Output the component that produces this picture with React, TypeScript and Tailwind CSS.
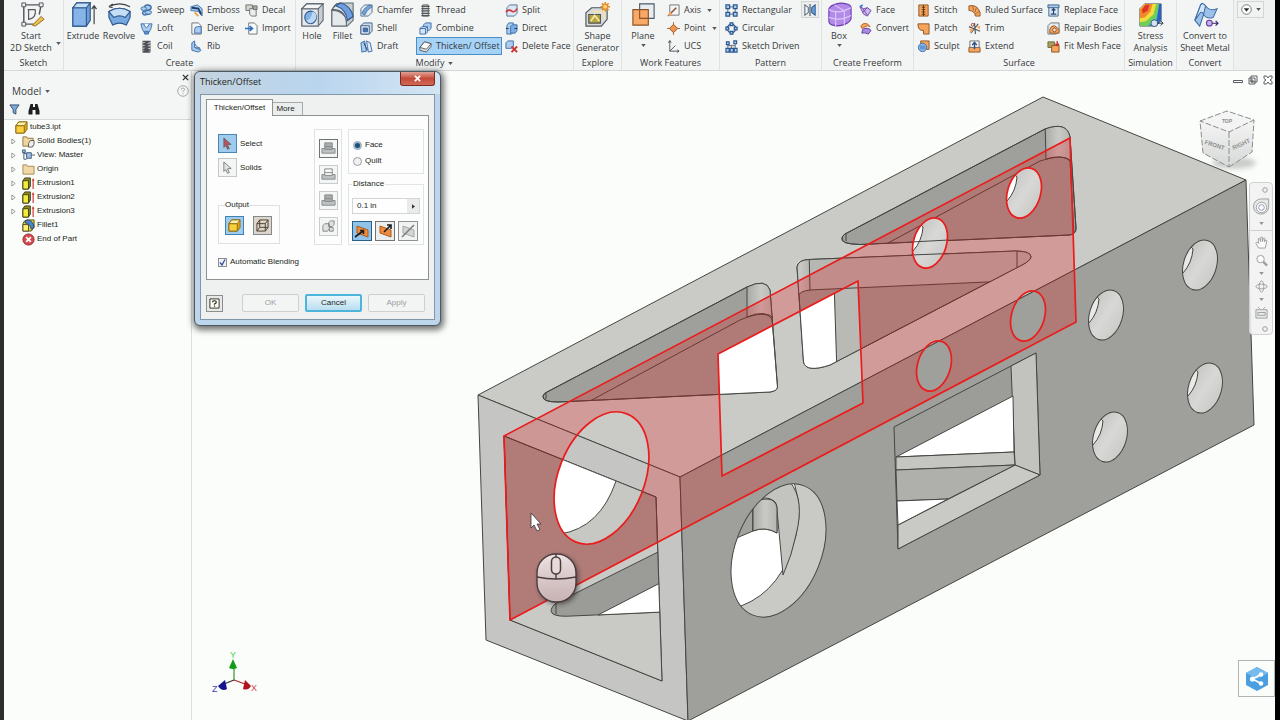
// src/App.tsx
import React, { useState } from "react";

/* ---------- ribbon icons (14 x 14 unless noted) ---------- */

const BLUE = "#3f6ea8";
const LIGHT = "#a9cdf0";
const ORANGE = "#f7a55c";
const BROWN = "#8d5426";

const smallIcons: Record<string, React.ReactNode> = {
  sweep: (
    <g stroke={BLUE} fill={LIGHT}>
      <path d="M5 5q-1-4 3-4 4 0 4 3 0 2-3 2.500L5 7.500q-3 1-2 3 1 2 4 1l4-1" strokeWidth="1.500" />
      <ellipse cx="4" cy="5" rx="3" ry="2" />
      <ellipse cx="9" cy="9" rx="3.500" ry="2" />
    </g>
  ),
  loft: (
    <g stroke={BLUE}>
      <path d="M1 2h12l-1.500 6L9 12H5L2.500 8z" fill={LIGHT} />
      <path d="M4 2q3 8 6 0" fill="#eef5fb" />
      <path d="M5 10h4v3H5z" fill="#5f92cf" />
    </g>
  ),
  coil: (
    <g stroke="#4b4f54" fill="none" strokeWidth="1.600">
      <path d="M3 1.500h8L3 4.500h8L3 7.500h8L3 10.500h8L3 13h8" />
      <path d="M3 1v12M11 1v12" stroke="#8a8e92" strokeWidth="1" />
    </g>
  ),
  emboss: (
    <g>
      <path d="M1 3l7-2 5 4v8l-4-5-8-1z" fill={LIGHT} stroke={BLUE} />
      <path d="M2 4l7 1 3 6" stroke="#1f3f6b" strokeWidth="2" fill="none" />
      <path d="M5 9l4 4" stroke="#eaa13c" strokeWidth="2" />
    </g>
  ),
  derive: (
    <g stroke="#6f7478" fill="#f5f7f8">
      <path d="M2 1h7l3 3v9H2z" />
      <path d="M5 12V8q0-3 3-3h4v7z" fill={LIGHT} stroke={BLUE} />
    </g>
  ),
  rib: (
    <g stroke={BLUE} fill={LIGHT}>
      <path d="M2 3l3-2v7l7 3-3 2-7-2z" />
      <path d="M5 4q2 4 6 5l-6-1z" fill="#eef5fb" />
    </g>
  ),
  decal: (
    <g stroke="#6b6f72">
      <path d="M1 1h7v6H1z" fill="#cfd8c8" />
      <path d="M5 5h7v8H7l-2-2z" fill="#eceeee" />
      <path d="M9 2h4v4H9z" fill="#a9b0a0" />
    </g>
  ),
  import: (
    <g>
      <path d="M4 1h6l3 3v9H4z" fill="#f7f9fa" stroke="#6f7478" />
      <path d="M0 7h7M5 4.500L8 7 5 9.500" stroke="#2a70bd" strokeWidth="1.800" fill="none" />
    </g>
  ),
  chamfer: (
    <g stroke="#4f6f94">
      <path d="M1 5l4-4h8v8l-4 4H1z" fill="#e6ebf0" />
      <path d="M2 10Q5 3 11 1l2 2Q7 6 5 12z" fill="#6fa6e0" />
    </g>
  ),
  shell: (
    <g stroke="#3f5f88">
      <path d="M1 4l3-3h9v9l-3 3H1z" fill="#cfdcea" />
      <path d="M1 4h9v9H1z" fill="#dfe9f3" />
      <path d="M3.500 6.500h4.500v4H3.500z" fill="#3c78bd" />
    </g>
  ),
  draft: (
    <g stroke={BLUE}>
      <path d="M1 3l4-2 2 11-5 1z" fill={LIGHT} />
      <path d="M7 1l4 2 2 9-4 1z" fill="#dbe8f4" />
      <path d="M4 3l4 8" stroke="#24456f" />
    </g>
  ),
  thread: (
    <g stroke="#55595d" fill="#d9dcdd">
      <path d="M4 1h6v12H4z" />
      <path d="M2.500 2.500h9M2.500 5h9M2.500 7.500h9M2.500 10h9M2.500 12.500h9" strokeWidth="1.400" />
    </g>
  ),
  combine: (
    <g stroke={BLUE}>
      <path d="M5 3l2-2h6v6l-2 2H5z" fill={LIGHT} />
      <path d="M1 7l2-2h6v6l-2 2H1z" fill="#d4e5f6" />
      <path d="M1 7h6v6M7 7l2-2" fill="none" />
    </g>
  ),
  thicken: (
    <g stroke="#565b60">
      <path d="M1 8l5-6 7 2v3l-5 6-7-2z" fill="#dfe3e6" />
      <path d="M1 8l5-6 7 2-5 6z" fill="#fafbfb" />
    </g>
  ),
  split: (
    <g>
      <path d="M2 4l3-3h8v9l-3 3H2z" fill="#dbe8f4" stroke="#4f6f94" />
      <path d="M1 9Q4 5 7 7.500T13 5" stroke="#d2353a" strokeWidth="1.800" fill="none" />
    </g>
  ),
  direct: (
    <g stroke={BLUE}>
      <path d="M2 4l2-3h5v9l-2 3H2z" fill={LIGHT} />
      <path d="M6 5l2-2h5v6l-2 3H6z" fill="#7eb0e6" />
      <path d="M1 7h3M10 7h3" stroke="#20334d" />
    </g>
  ),
  deleteFace: (
    <g>
      <path d="M1 3l2-2h6v6L7 9H1z" fill={LIGHT} stroke={BLUE} />
      <path d="M7 7l6 6M13 7l-6 6" stroke="#d03030" strokeWidth="2" />
    </g>
  ),
  axis: (
    <g>
      <path d="M3 1h10v11H3z" fill="#f4f6f6" stroke="#6f7478" />
      <path d="M1 13L10 4" stroke="#8b4b2b" strokeWidth="1.600" />
      <path d="M1 13l2-5 3 3z" fill={ORANGE} />
    </g>
  ),
  point: (
    <g>
      <path d="M7 0v14M0 7h14" stroke="#9c6b45" />
      <path d="M7 2.500L11.500 7 7 11.500 2.500 7z" fill="#f2954a" stroke={BROWN} />
    </g>
  ),
  ucs: (
    <g stroke="#4c5257" fill="none">
      <path d="M3 1v11h10M3 12l6-6" />
      <path d="M1.500 3L3 .5 4.500 3M11 10.500l2 1.500-2 1.500" />
    </g>
  ),
  rectangular: (
    <g fill={LIGHT} stroke="#2b568f" strokeWidth="1.300">
      <path d="M3 3h8v8H3z" fill="none" stroke="#7b8690" />
      <path d="M1 1h4v4H1zM9 1h4v4H9zM1 9h4v4H1zM9 9h4v4H9z" />
    </g>
  ),
  circular: (
    <g fill={LIGHT} stroke="#2b568f" strokeWidth="1.300">
      <circle cx="7" cy="7" r="4.500" fill="none" />
      <path d="M5.500 1h3v3h-3zM5.500 10h3v3h-3zM1 5.500h3v3H1zM10 5.500h3v3h-3z" />
    </g>
  ),
  sketchDriven: (
    <g fill={LIGHT} stroke="#2b568f" strokeWidth="1.200">
      <path d="M3 4v6M7 5v6M11 4v6M3 6h8" fill="none" stroke="#7b8690" />
      <path d="M1 9h3.500v4H1zM5.500 9h3.500v4H5.500zM10 9h3v4h-3z" />
      <path d="M1.500 2h3v3h-3zM9.500 1h3v3h-3z" />
    </g>
  ),
  mirror: (
    <g strokeWidth="1.200">
      <path d="M1 1l4 3v6l-4 3z" fill="#f4f8fb" stroke="#5a6a7a" />
      <path d="M13 1L9 4v6l4 3z" fill="#69a4e0" stroke="#2b568f" />
      <path d="M7 0v14" stroke="#3c4a58" />
    </g>
  ),
  face: (
    <g>
      <path d="M1 3l4 2 4-1 4 3-4 6-4-2z" fill="#cdb7ee" stroke="#6d48a8" />
      <path d="M4 5l5 7M9 4L4 9" stroke="#6d48a8" />
      <path d="M1 3l3-2" stroke="#3b7bd0" strokeWidth="2" />
    </g>
  ),
  convertFace: (
    <g>
      <path d="M2 4q3-4 7-2l3 3-3-1-6 3z" fill={ORANGE} stroke="#b5662a" />
      <path d="M4 8q5-3 9 1l-3 4q-4-2-7-1z" fill="#a98ce0" stroke="#5d3ba0" />
    </g>
  ),
  stitch: (
    <g>
      <path d="M2 1h10v12H2z" fill={ORANGE} stroke={BROWN} />
      <path d="M7 1v12" stroke="#5a3415" />
      <path d="M5 3.500h4M5 6h4M5 8.500h4M5 11h4" stroke="#5a3415" />
    </g>
  ),
  patch: <path d="M1 2h12v11H7V9q-6 1-6-7z" fill={ORANGE} stroke={BROWN} />,
  sculpt: (
    <g>
      <path d="M4 1h9v9H4z" fill={ORANGE} stroke={BROWN} />
      <circle cx="6" cy="8" r="4.500" fill="#8fb9ea" stroke={BLUE} />
      <path d="M3 6h6v4H3z" fill="#3f7fcb" opacity=".6" />
    </g>
  ),
  ruled: (
    <g>
      <path d="M1 2q9-2 12 7v4H8Q7 7 1 7z" fill={ORANGE} stroke={BROWN} />
      <path d="M5 2l1 5M9 4L7.500 9M12 8l-4 3" stroke={BROWN} strokeWidth=".8" />
    </g>
  ),
  trim: (
    <g>
      <path d="M1 5l12 5M7 1l1 12M3 12l8-10" stroke="#555b60" strokeWidth="1.300" />
      <path d="M1 7l5 1-3 4zM9 5l4-1v4z" fill={ORANGE} />
      <circle cx="5" cy="3" r="1.500" fill="none" stroke="#a03a2a" />
    </g>
  ),
  extend: (
    <g>
      <path d="M1 8h12v5H1z" fill={ORANGE} stroke={BROWN} />
      <path d="M2 1h10v7H2z" fill="#f6f2ee" stroke="#6f7478" />
      <path d="M7 10V3M4.500 5.500L7 2.500l2.500 3" stroke="#2a4f86" strokeWidth="1.500" fill="none" />
    </g>
  ),
  replaceFace: (
    <g>
      <path d="M2 3h10v10H2z" fill="#dce9f6" stroke="#3f5f88" />
      <path d="M1 1h12v3H1z" fill={LIGHT} stroke="#3f5f88" />
      <path d="M7 11V5M5 7l2-2 2 2M4 11h6" stroke="#26476f" strokeWidth="1.300" fill="none" />
    </g>
  ),
  repair: (
    <g>
      <path d="M1 4l3-3h9v9l-3 3H1z" fill="#e9ecef" stroke="#6f7478" />
      <path d="M3 12V8q1-4 5-4l5 4v4z" fill={ORANGE} stroke={BROWN} />
      <circle cx="8" cy="8.500" r="2" fill="#f8e4d2" stroke={BROWN} />
    </g>
  ),
  fitMesh: (
    <g>
      <path d="M1 2h7v6H1z" fill="#a8a060" stroke="#6f6a35" />
      <path d="M5 6h8v7H5z" fill={ORANGE} stroke={BROWN} />
      <path d="M11 1v5M9 4l2 2 2-2" stroke="#c62f2f" strokeWidth="1.400" fill="none" />
    </g>
  ),
};

/* large icons, 28 x 28 */
const largeIcons: Record<string, React.ReactNode> = {
  sketch: (
    <g fill="none" stroke="#54585c" strokeWidth="1.500">
      <path d="M5 4h19M6 3v22M24 4L22 14M6 24h10" />
      <path d="M10 9h8M11 9v10q8-1 7-10" strokeWidth="1.200" />
      <path d="M4 2h4v4H4zM22 2h4v4h-4zM4 22h4v4H4z" fill="#eceeee" strokeWidth="1" />
      <path d="M15 25l9-9 3 3-9 7z" fill="#f0c04a" stroke="#8d6a20" strokeWidth="1" />
    </g>
  ),
  extrude: (
    <g stroke="#31598c" strokeWidth="1.200">
      <path d="M3 7l4-5h14v18l-4 6H3z" fill="#6c9fdb" />
      <path d="M3 7h14v19H3z" fill="#86b4e8" />
      <path d="M3 7l4-5h14l-4 5z" fill="#c5ddf5" />
      <path d="M25 24V6M22.500 8.500L25 5l2.500 3.500" stroke="#3c4045" fill="none" />
    </g>
  ),
  revolve: (
    <g stroke="#31598c" strokeWidth="1.200">
      <path d="M3 11q11-7 22 0v6l-4 8q-7-4-14 0l-4-8z" fill="#78a9e1" />
      <path d="M3 11q11-7 22 0l-5 6q-6-3-12 0z" fill="#c5ddf5" />
      <path d="M3 6q11-6 22 0M3 6l4-3M3 6l4 1" stroke="#3c4045" fill="none" />
    </g>
  ),
  hole: (
    <g stroke="#5c6670" strokeWidth="1.100">
      <path d="M3 8l5-5h17v17l-5 6H3z" fill="#c9ced3" />
      <path d="M3 8h17v18H3z" fill="#e6e9ec" />
      <path d="M3 8l5-5h17l-5 5z" fill="#f3f5f6" />
      <ellipse cx="12" cy="17" rx="6" ry="6.500" fill="#7fb0e6" stroke="#31598c" />
      <path d="M8 20q5-1 6-9 4 1 4 6-2 5-6 6-3 0-4-3z" fill="#bcd8f4" stroke="none" />
    </g>
  ),
  fillet: (
    <g stroke="#5c6670" strokeWidth="1.100">
      <path d="M3 10q2-7 8-8h14v18l-6 6H3z" fill="#c9ced3" />
      <path d="M3 10q9-1 15 8v8H3z" fill="#e6e9ec" />
      <path d="M8 3h5q10 3 12 13l-7 5Q16 8 3 9z" fill="#e6e9ec" />
      <path d="M12 2q11 3 13 14l-6 4q-1-11-12-15z" fill="#6f9fe0" stroke="#31598c" />
    </g>
  ),
  shape: (
    <g stroke="#50565c" strokeWidth="1.200">
      <path d="M2 12l6-5h16v12l-6 7H2z" fill="#d7dbde" />
      <path d="M5 14h12v9H5z" fill="#b9a53a" />
      <path d="M7 21l4-6 5 6M9 11h12v8" fill="none" stroke="#f2e7a6" strokeWidth="1.800" />
      <path d="M22 1v10M17 6h10M18.500 2.500l7 7M25.500 2.500l-7 7" stroke="#e08a2a" strokeWidth="1.600" />
      <circle cx="22" cy="6" r="2.600" fill="#ffd27a" stroke="#e08a2a" />
    </g>
  ),
  plane: (
    <g strokeWidth="1.200">
      <path d="M10 3h15v15H10z" fill="#e8edf2" stroke="#4f5b68" />
      <path d="M3 9h16v16H3z" fill="#f9a866" stroke={BROWN} />
      <path d="M10 9v9h9" fill="none" stroke={BROWN} />
    </g>
  ),
  box: (
    <g stroke="#6b3fb4" strokeWidth="1.200">
      <path d="M3 9q0-3 5-5 6-3 13-1 5 1 5 4v11q-1 4-6 6-7 3-13 1-4-1-4-4z" fill="#b38ae8" />
      <path d="M3 9q8 4 16 1l7-3M19 10v15M10 11v15M3 17q8 3 16 1l7-3M9 4q4 3 10 6" fill="none" stroke="#dcc7f7" />
    </g>
  ),
  stress: (
    <g>
      <path d="M3 8l5-5h17v17l-5 6H3z" fill="#37a8d8" stroke="#54585c" />
      <path d="M3 8l5-5h15l-3 15-9 8H3z" fill="#6fce5a" />
      <path d="M3 8l5-5h12l-3 11-8 7-6 1z" fill="#f6dd3c" />
      <path d="M3 9l5-6h8l-2 8-6 6-5 1z" fill="#f08a2e" />
      <path d="M5 9l4-5h4l-2 6-5 3z" fill="#e23424" />
      <path d="M23 3h2v16l-5 6z" fill="#2c5fc4" />
      <circle cx="18" cy="23" r="3.500" fill="#d4e4f4" stroke="#3c5a80" />
      <path d="M21 23h6M24.500 20.500l2.500 2.500-2.500 2.500" stroke="#26384f" fill="none" />
    </g>
  ),
  sheet: (
    <g strokeWidth="1.100">
      <path d="M3 20L9 4q2-3 5 1 4 6 12 3l-4 9q-7 2-10-3l-4 12z" fill="#9cc2ea" stroke="#3f6ea8" />
      <path d="M9 4q2-3 5 1l-2 9q-2-4-4-1l-5 7z" fill="#d5e6f7" stroke="#3f6ea8" />
      <circle cx="18" cy="23" r="3" fill="#c7b2ec" stroke="#5d3ba0" />
      <path d="M21 23h6M24.500 20.500l2.500 2.500-2.500 2.500" stroke="#38216b" fill="none" />
    </g>
  ),
};

function SmallTool({ icon, label, active, menu }: { icon: string; label: string; active?: boolean; menu?: boolean }) {
  return (
    <button
      type="button"
      className={`flex h-[18px] items-center gap-1 border px-[2px] whitespace-nowrap ${
        active ? "w-full border-[#4c8fc4] bg-[#a5d3f8]" : "border-transparent"
      }`}
    >
      <svg viewBox="0 0 14 14" className="h-[13px] w-[13px] shrink-0">
        {smallIcons[icon]}
      </svg>
      <span>{label}</span>
      {menu && <Caret className="ml-0.5" />}
    </button>
  );
}

function Caret({ className = "" }: { className?: string }) {
  return (
    <svg viewBox="0 0 6 4" className={`h-[3px] w-[5px] shrink-0 ${className}`}>
      <path d="M0 0h6L3 4z" fill="#55595c" />
    </svg>
  );
}

function LargeTool({ icon, lines, menu, width }: { icon: string; lines: string[]; menu?: boolean; width: string }) {
  return (
    <button type="button" className={`flex flex-col items-center pt-px text-center whitespace-nowrap ${width}`}>
      <svg viewBox="0 0 28 28" className="h-[27px] w-[27px] shrink-0">
        {largeIcons[icon]}
      </svg>
      <span className="mt-0.5 flex flex-col leading-[12px]">
        {lines.map((line) => (
          <span key={line}>{line}</span>
        ))}
      </span>
      {menu && <Caret className="mt-0.5" />}
    </button>
  );
}

function Group({ title, width, menu, children }: { title: string; width: string; menu?: boolean; children: React.ReactNode }) {
  return (
    <section className={`flex shrink-0 flex-col border-r border-[#dfe2e2] ${width}`}>
      <div className="flex h-[57px] items-start justify-center">{children}</div>
      <h2 className="flex items-center justify-center gap-1 leading-[14px] whitespace-nowrap">
        {title}
        {menu && <Caret />}
      </h2>
    </section>
  );
}

const Column = ({ width, children }: { width: string; children: React.ReactNode }) => (
  <div className={`flex flex-col items-start pt-px ${width}`}>{children}</div>
);

function Ribbon() {
  return (
    <header className="flex h-[71px] overflow-hidden border-b border-[#d5d8d8] bg-[#f3f5f4] font-['Open_Sans','Noto_Sans',sans-serif] text-[9px] text-[#36393b]">
      <Group title="Sketch" width="w-[60px]">
        <LargeTool icon="sketch" lines={["Start", "2D Sketch"]} width="w-[50px]" />
        <Caret className="mt-[42px]" />
      </Group>
      <Group title="Create" width="w-[232px]">
        <LargeTool icon="extrude" lines={["Extrude"]} width="w-9" />
        <LargeTool icon="revolve" lines={["Revolve"]} width="w-9" />
        <Column width="w-[50px]">
          <SmallTool icon="sweep" label="Sweep" />
          <SmallTool icon="loft" label="Loft" />
          <SmallTool icon="coil" label="Coil" />
        </Column>
        <Column width="w-[55px]">
          <SmallTool icon="emboss" label="Emboss" />
          <SmallTool icon="derive" label="Derive" />
          <SmallTool icon="rib" label="Rib" />
        </Column>
        <Column width="w-[52px]">
          <SmallTool icon="decal" label="Decal" />
          <SmallTool icon="import" label="Import" />
        </Column>
      </Group>
      <Group title="Modify" width="w-[278px]" menu>
        <LargeTool icon="hole" lines={["Hole"]} width="w-8" />
        <LargeTool icon="fillet" lines={["Fillet"]} width="w-[29px]" />
        <Column width="w-[59px]">
          <SmallTool icon="chamfer" label="Chamfer" />
          <SmallTool icon="shell" label="Shell" />
          <SmallTool icon="draft" label="Draft" />
        </Column>
        <Column width="w-[86px]">
          <SmallTool icon="thread" label="Thread" />
          <SmallTool icon="combine" label="Combine" />
          <SmallTool icon="thicken" label="Thicken/ Offset" active />
        </Column>
        <Column width="w-[71px]">
          <SmallTool icon="split" label="Split" />
          <SmallTool icon="direct" label="Direct" />
          <SmallTool icon="deleteFace" label="Delete Face" />
        </Column>
      </Group>
      <Group title="Explore" width="w-12">
        <LargeTool icon="shape" lines={["Shape", "Generator"]} width="w-11" />
      </Group>
      <Group title="Work Features" width="w-[98px]">
        <LargeTool icon="plane" lines={["Plane"]} width="w-[42px]" menu />
        <Column width="w-[55px]">
          <SmallTool icon="axis" label="Axis" menu />
          <SmallTool icon="point" label="Point" menu />
          <SmallTool icon="ucs" label="UCS" />
        </Column>
      </Group>
      <Group title="Pattern" width="w-[102px]">
        <Column width="w-[79px]">
          <SmallTool icon="rectangular" label="Rectangular" />
          <SmallTool icon="circular" label="Circular" />
          <SmallTool icon="sketchDriven" label="Sketch Driven" />
        </Column>
        <button type="button" aria-label="Mirror" className="mt-px flex h-[17px] w-[18px] items-center justify-center border border-[#d2d5d6] bg-[#eceeee]">
          <svg viewBox="0 0 14 14" className="h-3 w-3">
            {smallIcons.mirror}
          </svg>
        </button>
      </Group>
      <Group title="Create Freeform" width="w-[92px]">
        <LargeTool icon="box" lines={["Box"]} width="w-[34px]" menu />
        <Column width="w-[57px]">
          <SmallTool icon="face" label="Face" />
          <SmallTool icon="convertFace" label="Convert" />
        </Column>
      </Group>
      <Group title="Surface" width="w-[211px]">
        <Column width="w-[51px]">
          <SmallTool icon="stitch" label="Stitch" />
          <SmallTool icon="patch" label="Patch" />
          <SmallTool icon="sculpt" label="Sculpt" />
        </Column>
        <Column width="w-[79px]">
          <SmallTool icon="ruled" label="Ruled Surface" />
          <SmallTool icon="trim" label="Trim" />
          <SmallTool icon="extend" label="Extend" />
        </Column>
        <Column width="w-[80px]">
          <SmallTool icon="replaceFace" label="Replace Face" />
          <SmallTool icon="repair" label="Repair Bodies" />
          <SmallTool icon="fitMesh" label="Fit Mesh Face" />
        </Column>
      </Group>
      <Group title="Simulation" width="w-[52px]">
        <LargeTool icon="stress" lines={["Stress", "Analysis"]} width="w-12" />
      </Group>
      <Group title="Convert" width="w-[57px]">
        <LargeTool icon="sheet" lines={["Convert to", "Sheet Metal"]} width="w-[54px]" />
      </Group>
      <div className="flex-1 bg-[#eff1f1] pt-px pl-[3px]">
        <button type="button" aria-label="Ribbon options" className="flex h-[17px] w-[27px] items-center justify-center gap-1 border border-[#d2d5d6] bg-[#f1f3f3]">
          <svg viewBox="0 0 12 12" className="h-[11px] w-[11px]">
            <circle cx="6" cy="6" r="5.200" fill="#fff" stroke="#6b6f72" />
            <path d="M3 4.500h6L6 8.500z" fill="#2c2f31" />
          </svg>
          <Caret />
        </button>
      </div>
    </header>
  );
}

/* ---------- model browser ---------- */

const treeIcons: Record<string, React.ReactNode> = {
  part: (
    <g stroke="#8a6a10">
      <path d="M1 5l3-4h9v8l-3 4H1z" fill="#e0a820" />
      <path d="M1 5h9v8H1z" fill="#f8cf3c" />
      <path d="M1 5l3-4h9l-3 4z" fill="#fff0a8" />
    </g>
  ),
  solid: (
    <g stroke="#8a7448">
      <path d="M1 2h4l1 1.500h6V12H1z" fill="#f2d59c" />
      <path d="M7 9l2-3h4v4l-2 3H7z" fill="#eceeee" stroke="#55595c" />
    </g>
  ),
  view: (
    <g stroke="#3b5878" fill="#9fc0e4">
      <path d="M2 2v9h3M2 5h4" fill="none" />
      <path d="M0.500 1h3v3h-3zM5 4h5v6H5zM10 6.500h4" />
    </g>
  ),
  origin: <path d="M1 2h4l1 1.500h7V12H1z" fill="#f2d8a6" stroke="#a08a5c" />,
  extrusion: (
    <g stroke="#3b3b1c">
      <path d="M1 4l2-3h6v9l-2 3H1z" fill="#8f8a20" />
      <path d="M1 4h6v9H1z" fill="#f5ea3a" />
      <path d="M12 13V3" stroke="#d03a3a" strokeWidth="1.300" />
      <path d="M10.500 4L12 1l1.500 3z" fill="#d03a3a" stroke="none" />
    </g>
  ),
  fillet: (
    <g stroke="#4f4a1c">
      <path d="M1 5q1-4 5-4h7v8l-3 4H1z" fill="#e8d93a" />
      <path d="M5 1q7 0 8 8l-3 2Q9 5 3 4z" fill="#4a86cf" stroke="#26476f" />
      <path d="M1 6h6v7H1z" fill="#fbf27a" />
    </g>
  ),
  end: (
    <g>
      <circle cx="7" cy="7" r="6" fill="#d8474c" stroke="#8c2a2e" />
      <path d="M4.500 4.500l5 5M9.500 4.500l-5 5" stroke="#fff" strokeWidth="2" />
    </g>
  ),
};

const treeItems = [
  { icon: "solid", label: "Solid Bodies(1)", open: true },
  { icon: "view", label: "View: Master", open: true },
  { icon: "origin", label: "Origin", open: true },
  { icon: "extrusion", label: "Extrusion1", open: true },
  { icon: "extrusion", label: "Extrusion2", open: true },
  { icon: "extrusion", label: "Extrusion3", open: true },
  { icon: "fillet", label: "Fillet1", open: false },
  { icon: "end", label: "End of Part", open: false },
];

function ModelBrowser() {
  return (
    <aside className="flex w-[188px] shrink-0 flex-col border-r border-[#dcdfdf] bg-[#f4f6f5]">
      <div className="flex h-3 items-center justify-end pr-0.5">
        <button type="button" aria-label="Close browser">
          <svg viewBox="0 0 8 8" className="h-[7px] w-[7px]">
            <path d="M1 1l6 6M7 1L1 7" stroke="#303335" strokeWidth="1.600" />
          </svg>
        </button>
      </div>
      <div className="flex h-4 items-center justify-between pr-0.5 pl-2 font-['Open_Sans','Noto_Sans',sans-serif] text-[10px] text-[#36393b]">
        <button type="button" className="flex items-center gap-1">
          Model <Caret />
        </button>
        <button type="button" aria-label="Help">
          <svg viewBox="0 0 12 12" className="h-3 w-3" fill="none" stroke="#a5a9aa">
            <circle cx="6" cy="6" r="5.300" />
            <path d="M4.300 4.700q0-1.700 1.700-1.700t1.700 1.500Q7.700 5.500 6 6.300V7.200M6 8.300v1" />
          </svg>
        </button>
      </div>
      <div className="flex h-5 items-center gap-2 pl-[5px]">
        <button type="button" aria-label="Filter">
          <svg viewBox="0 0 12 12" className="h-[11px] w-[11px]">
            <path d="M1 1h10L7.500 6v5l-3-1.500V6z" fill="#7fa9d6" stroke="#2c4a6e" />
          </svg>
        </button>
        <button type="button" aria-label="Find">
          <svg viewBox="0 0 12 12" className="h-3 w-3" fill="#1d1f20">
            <path d="M2.500 1h2.500v3h2V1h2.500l2 7v3.500H7.500V7h-3v4.500H.5V8z" />
          </svg>
        </button>
      </div>
      <div className="flex-1 border-t border-[#d3dada] bg-[#fbfdfa] pl-1 font-['Liberation_Sans',Arial,sans-serif] text-[8px] text-[#1c1f20]">
        <div className="flex h-[14px] items-center gap-0.5 pl-[7px]">
          <svg viewBox="0 0 14 14" className="h-[13px] w-[13px]">{treeIcons.part}</svg>
          tube3.ipt
        </div>
        <ul>
          {treeItems.map((item) => (
            <li key={item.label} className="flex h-[14px] items-center">
              <span className="flex w-[14px] items-center pl-[3px]">
                {item.open && (
                  <button type="button" aria-label={`Expand ${item.label}`}>
                    <svg viewBox="0 0 6 8" className="h-[7px] w-[5px]">
                      <path d="M1 1l4 3-4 3z" fill="#fff" stroke="#85898a" />
                    </svg>
                  </button>
                )}
              </span>
              <svg viewBox="0 0 14 14" className="mr-0.5 h-[13px] w-[13px]">{treeIcons[item.icon]}</svg>
              {item.label}
            </li>
          ))}
        </ul>
      </div>
    </aside>
  );
}

/* ---------- 3D part ---------- */

const SLOT_LEFT = "M547 392L747 287Q766 278 770 290L777.500 387Q777 391 770 392L558 402Q542 402 543 396Q544 393 547 392Z";
const SLOT_MID = "M797 267Q798 260 809 259.500L1015 251Q1031 251 1031 257Q1030 261 1022 265L830 365Q806 373 803.500 362Z";
const SLOT_RIGHT = "M845 234L1045 129Q1067 121 1070 137L1076 228Q1076 234 1070 235L860 244.500Q840 244 842 238Q842 236 845 234Z";
const WINDOW = "M718 354L858 281L863 403L722 476Z";

const redHoles = [
  [1024, 193],
  [930, 243],
  [1028, 316],
  [934, 366],
];
const sideHoles = [
  [1200, 265],
  [1106, 315],
  [1205, 388],
  [1110, 437],
];

function Part() {
  return (
    <svg viewBox="192 71 1083 649" className="block h-auto w-full">
      <defs>
        <linearGradient id="bore" x1="0" y1="0" x2="1" y2="1">
          <stop offset="0" stopColor="#b9bab6" />
          <stop offset="0.500" stopColor="#d8d9d6" />
          <stop offset="1" stopColor="#bfc0bc" />
        </linearGradient>
        <linearGradient id="round" x1="0" x2="1">
          <stop offset="0" stopColor="#a9aaa6" />
          <stop offset="0.500" stopColor="#c9c9c6" />
          <stop offset="1" stopColor="#b4b5b1" />
        </linearGradient>
        <linearGradient id="mouse" x1="0" y1="0" x2="0" y2="1">
          <stop offset="0" stopColor="#f4e9ea" />
          <stop offset="1" stopColor="#cdb6b8" />
        </linearGradient>
        <linearGradient id="cubeSide" x1="0" y1="0" x2="0" y2="1">
          <stop offset="0" stopColor="#f4f5f4" />
          <stop offset="1" stopColor="#d6d8d7" />
        </linearGradient>
        <filter id="soft" x="-50%" y="-50%" width="200%" height="200%">
          <feGaussianBlur stdDeviation="2.500" />
        </filter>
        <clipPath id="windowClip"><path d={WINDOW} /></clipPath>
        <clipPath id="leftClip"><path d={SLOT_LEFT} /></clipPath>
        <clipPath id="midClip"><path d={SLOT_MID} /></clipPath>
        <clipPath id="rightClip"><path d={SLOT_RIGHT} /></clipPath>
        <clipPath id="openingClip"><path d="M504 436L656 497L662 681L510 620Z" /></clipPath>
        <clipPath id="frontBore"><ellipse cx="601.500" cy="478" rx="43" ry="69" transform="rotate(21.600 601.500 478)" /></clipPath>
        <clipPath id="sideBore"><ellipse cx="778.500" cy="550.500" rx="43" ry="69.500" transform="rotate(21.600 778.500 550.500)" /></clipPath>
        <clipPath id="boreClip"><ellipse rx="16.500" ry="25.700" transform="rotate(17)" /></clipPath>
        {/* selected face with its cut-outs removed */}
        <mask id="faceMask" maskUnits="userSpaceOnUse" x="192" y="71" width="1083" height="649">
          <path d="M504 436L1070 138L1076 322L510 620Z" fill="#fff" />
          <path d={WINDOW} fill="#000" />
          <ellipse cx="601.500" cy="478" rx="43" ry="69" transform="rotate(21.600 601.500 478)" fill="#000" />
          {redHoles.map(([x, y]) => (
            <ellipse key={x} rx="16.500" ry="25.700" transform={`translate(${x} ${y}) rotate(17)`} fill="#000" />
          ))}
        </mask>
      </defs>

      <g stroke="#444642" strokeLinejoin="round">
        {/* outer faces */}
        <path d="M478 395L1043 97L1246 180L680 477Z" fill="#cacbc7" />
        <path d="M478 395L680 477L688 721L486 640Z" fill="#c5c6c3" />
        <path d="M680 477L1246 180L1254 425L688 721Z" fill="#9fa09b" />

        {/* slot left */}
        <path d={SLOT_LEFT} fill="#9fa09b" />
        <g clipPath="url(#leftClip)">
          <path d="M747 280H775V319Q765 309 747 317Z" fill="url(#round)" />
          <g clipPath="url(#windowClip)"><path d="M715 300H790V480H715Z" fill="#fff" stroke="none" /></g>
          <path d="M590 401L740 320Q766 309 772 319L778 392" fill="none" />
        </g>
        <path d={SLOT_LEFT} fill="none" />
        <path d="M546 393V399" />

        {/* slot middle */}
        <path d={SLOT_MID} fill="#9fa09b" />
        <g clipPath="url(#midClip)">
          <g clipPath="url(#windowClip)">
            <path d="M795 285H834L837 370H795Z" fill="#fff" stroke="none" />
            <path d="M834 280H866V375H837Z" fill="#b9bab6" />
          </g>
          <path d="M790 250H1040V280L987 282L809 290Q800 290 797 296Z" fill="#b6b7b3" />
          <path d="M790 250H809L810 290Q800 291 798 296Z" fill="url(#round)" />
          <path d="M1017 250V270" />
        </g>
        <path d={SLOT_MID} fill="none" />

        {/* slot right */}
        <path d={SLOT_RIGHT} fill="#9fa09b" />
        <g clipPath="url(#rightClip)">
          <path d="M1045 120H1072V161Q1062 154 1046 159Z" fill="url(#round)" />
          <path d="M888 243L1040 161Q1064 153 1070 161L1074 234" fill="none" />
        </g>
        <path d={SLOT_RIGHT} fill="none" />
        <path d="M846 233V241" />

        {/* front opening */}
        <path d="M504 436L656 497L662 681L510 620Z" fill="#a0a19c" />
        <g clipPath="url(#openingClip)">
          <path d="M510 620L662 540V690Z" fill="#c9cac6" stroke="none" />
          <path d="M662 550L556 603Q548 610 553 614Q558 617 572 616L662 612Z" fill="#9b9c97" />
          <path d="M598 615L662 582V612Z" fill="#fff" />
          <path d="M556 603V614" />
        </g>
        <path d="M504 436L656 497L662 681L510 620Z" fill="none" />

        {/* bore seen through the selected face */}
        <g clipPath="url(#frontBore)">
          <g clipPath="url(#openingClip)">
            <path d="M504 436L656 497V560H504Z" fill="#c7c8c4" />
            <path d="M504 436L616 481Q600 528 560 534H504Z" fill="#fff" />
          </g>
        </g>
        {[redHoles[0], redHoles[1]].map(([x, y]) => (
          <g key={x} transform={`translate(${x} ${y})`} clipPath="url(#boreClip)">
            <path d="M-20-30H20V30H-20Z" fill="url(#bore)" />
            <path d="M-20-30L-7-16Q-8-2-17 8H-20Z" fill="#fff" />
          </g>
        ))}
        <path d="M911 242L949 240M911 255L949 253.500" />

        {/* side window */}
        <path d="M894 427L1036 353L1040 475L898 549Z" fill="#9c9d98" />
        <path d="M1011 366L1036 353L1040 475L1015 465Z" fill="#c2c3bf" />
        <path d="M1015 465L1040 475L898 549V525Z" fill="#c9cac6" />
        <path d="M896 457L1013 396L1014 452Z" fill="#fff" />
        <path d="M896 457L1014 452L1015 465L896 470Z" fill="#c5c6c2" />
        <path d="M896 470L1015 465L948 499L897 501Z" fill="#afb0ac" />
        <path d="M897 501L948 499L898 525Z" fill="#fff" />

        {/* large side bore */}
        <g clipPath="url(#sideBore)">
          <path d="M720 470H840V630H720Z" fill="#c9cac6" />
          <path d="M720 470H788Q805 500 796 535Q783 590 741 606H720Z" fill="#fff" />
          <path d="M720 470H753V531L720 545Z" fill="#a2a39e" />
          <path d="M753 480H777V533Q765 526 753 531Z" fill="url(#round)" />
          <path d="M753 503Q765 494 774 501Q777 503 777 510L783 575Q792 555 796 535Q805 500 790 482L770 480L753 492Z" fill="#c3c4c0" />
          <path d="M753 503V531Q765 526 777 533L777 508Q776 500 768 499Q760 498 753 503Z" fill="url(#round)" />
        </g>
        <ellipse cx="778.500" cy="550.500" rx="43" ry="69.500" transform="rotate(21.600 778.500 550.500)" fill="none" />

        {sideHoles.map(([x, y]) => (
          <g key={x} transform={`translate(${x} ${y})`}>
            <g clipPath="url(#boreClip)">
              <path d="M-20-30H20V30H-20Z" fill="url(#bore)" />
              <path d="M-20-30L-7-16Q-8-2-17 8H-20Z" fill="#e9eae8" />
            </g>
            <ellipse rx="16.500" ry="25.700" transform="rotate(17)" fill="none" />
          </g>
        ))}
      </g>

      {/* highlighted face */}
      <path d="M504 436L1070 138L1076 322L510 620Z" fill="#e30c0c" fillOpacity="0.250" mask="url(#faceMask)" />
      <g fill="none" stroke="#ea1c1c" strokeWidth="1.700" strokeLinejoin="round">
        <path d="M504 436L1070 138L1076 322L510 620Z" />
        <path d={WINDOW} />
        <ellipse cx="601.500" cy="478" rx="43" ry="69" transform="rotate(21.600 601.500 478)" />
        {redHoles.map(([x, y]) => (
          <ellipse key={x} rx="16.500" ry="25.700" transform={`translate(${x} ${y}) rotate(17)`} />
        ))}
      </g>

      {/* pointer and mouse button hint */}
      <path d="M531 513V528L534 525L537 531L540 529.500L537 524H541Z" fill="#fff" stroke="#333" strokeWidth=".8" />
      <rect x="539" y="556" width="39" height="48" rx="19" fill="#222" opacity=".65" filter="url(#soft)" />
      <rect x="537" y="554" width="39" height="48" rx="19" fill="url(#mouse)" fillOpacity=".95" stroke="#4b3d3e" strokeWidth="1.400" />
      <path d="M537 577Q556 581 576 577M556 554V557M556 574V579" fill="none" stroke="#4b3d3e" strokeWidth="1.400" />
      <rect x="551.500" y="557" width="9" height="17" rx="4.500" fill="#e8dadb" stroke="#4b3d3e" strokeWidth="1.500" />

      {/* view cube */}
      <g>
        <ellipse cx="1234" cy="163" rx="22" ry="6" fill="#9a9c9b" opacity=".5" filter="url(#soft)" />
        <path d="M1200 121L1227 111L1254 120L1229 132Z" fill="#f3f4f3" />
        <path d="M1200 121L1229 132V167L1203 153Z" fill="url(#cubeSide)" />
        <path d="M1254 120L1229 132V167L1252 152Z" fill="url(#cubeSide)" />
        <path d="M1200 121L1227 111L1254 120L1229 132ZM1229 132V167L1203 153L1200 121M1229 167L1252 152L1254 120" fill="none" stroke="#8b8e8d" strokeDasharray="6 2" />
        <g fontFamily="Liberation Sans" fontWeight="bold" fill="#8b8e8d" textAnchor="middle">
          <text x="1227" y="123" fontSize="5">TOP</text>
          <text transform="translate(1214 147) rotate(18)" fontSize="6">FRONT</text>
          <text transform="translate(1242 146) rotate(-25)" fontSize="6">RIGHT</text>
        </g>
      </g>

      {/* axis triad */}
      <g strokeWidth="1.200">
        <path d="M234 680V665" stroke="#2c9a2c" />
        <path d="M234 680L245 684" stroke="#b3202a" />
        <path d="M234 680L224 684" stroke="#333" />
        <path d="M229 668L233 659L237 668Q233 670 229 668Z" fill="#129a18" />
        <path d="M243 689L245 680L251 686Q248 691 243 689Z" fill="#b3131c" />
        <path d="M227 689L225 680L218 686Q222 692 227 689Z" fill="#15158f" />
        <g fontFamily="Liberation Sans" fontSize="9">
          <text x="230" y="658" fill="#4ccf55">Y</text>
          <text x="251" y="691" fill="#d0404a">X</text>
          <text x="212" y="692" fill="#3b3bb5">Z</text>
        </g>
      </g>
    </svg>
  );
}

function NavigationBar() {
  return (
    <nav aria-label="Navigation" className="absolute top-[111px] right-0.5 flex h-[153px] w-6 flex-col items-center gap-[5px] rounded border border-[#cfd2d1] bg-[#f1f2f1]/90 pt-1 text-[#9b9e9d]">
      <svg viewBox="0 0 6 6" className="mr-1 h-[6px] w-[6px] self-end" fill="none" stroke="currentColor"><circle cx="3" cy="3" r="2.300" /></svg>
      <button type="button" aria-label="Full navigation wheel">
        <svg viewBox="0 0 20 20" className="h-[19px] w-[19px]" fill="none" stroke="currentColor">
          <path d="M10 1h7.500v9A8 8 0 1 1 10 1z" fill="#e6e8e8" />
          <circle cx="10" cy="10" r="5.500" fill="#fbfbfb" />
          <circle cx="10" cy="10" r="3" stroke="#8e93b8" />
        </svg>
      </button>
      <Caret className="opacity-60" />
      <span className="h-px w-full bg-[#cfd2d1]" />
      <button type="button" aria-label="Pan">
        <svg viewBox="0 0 14 14" className="h-[13px] w-[13px]" fill="#fafafa" stroke="currentColor">
          <path d="M4 13L1 8q0-2 2-1l1 1L3.500 3q1-1.500 1.800 0L6 6l.3-4.500q1-1 1.700 0V6l1-3.500q1.200-1 1.600.3L10 6.500l1.500-2q1.500-.5 1.200 1L11 13z" />
        </svg>
      </button>
      <button type="button" aria-label="Zoom">
        <svg viewBox="0 0 14 14" className="h-[13px] w-[13px]" fill="#fafafa" stroke="currentColor">
          <circle cx="6" cy="5.500" r="4" />
          <path d="M9 8.500l4 4" strokeWidth="2.400" />
        </svg>
      </button>
      <Caret className="opacity-60" />
      <button type="button" aria-label="Orbit">
        <svg viewBox="0 0 14 14" className="h-[13px] w-[13px]" fill="none" stroke="currentColor">
          <ellipse cx="7" cy="7" rx="2.500" ry="6" />
          <ellipse cx="7" cy="7" rx="6" ry="2.500" />
        </svg>
      </button>
      <Caret className="opacity-60" />
      <button type="button" aria-label="Look at">
        <svg viewBox="0 0 14 14" className="h-[13px] w-[13px]" fill="#e9ebea" stroke="currentColor">
          <path d="M1 4h12v9H1zM3 7h8v3H3zM3 1l2 2M11 1L9 3" />
        </svg>
      </button>
      <svg viewBox="0 0 6 6" className="mt-auto mr-1 mb-0.5 h-[6px] w-[6px] shrink-0 self-end" fill="none" stroke="currentColor"><circle cx="3" cy="3" r="2.300" /></svg>
    </nav>
  );
}

/* ---------- Thicken/Offset dialog ---------- */

function ArrowIcon({ color }: { color: string }) {
  return (
    <svg viewBox="0 0 12 14" className="h-[13px] w-[11px]">
      <path d="M2 1l8 7-4 .5 2 4-2 .8-2-4-2 2z" fill={color} stroke="#5b5f61" strokeWidth=".8" />
    </svg>
  );
}

function OperationIcon({ variant }: { variant: number }) {
  return (
    <svg viewBox="0 0 16 16" className="h-[15px] w-[15px]" fill="#bfc2c2" stroke="#85898a">
      {variant === 3 ? (
        <path d="M2 7l2-2h5v5l-2 3H2zM8 4l2-2h4v4l-2 2H8zM9 9h4v4H9z" fill="#dfe1e1" />
      ) : (
        <>
          <path d="M1 8h14v5H1z" />
          <path d="M4 2h8v7H4z" fill={variant === 1 ? "#f7f8f8" : "#a9acac"} />
          <path d="M4 6h8" />
        </>
      )}
    </svg>
  );
}

function DirectionIcon({ variant }: { variant: number }) {
  const fill = variant === 2 ? "#d3d5d5" : "#f08a3c";
  return (
    <svg viewBox="0 0 16 16" className="h-[16px] w-[16px]">
      <path d="M3 3l11 4v7L3 10z" fill={fill} stroke={variant === 2 ? "#a5a8a8" : "#a85a1e"} />
      {variant === 0 && <path d="M1 14l8-6M6 7.500h3.500V11" stroke="#1b1d1e" strokeWidth="1.600" fill="none" />}
      {variant === 1 && <path d="M7 9l7-7M10 2h4v4" stroke="#1b1d1e" strokeWidth="1.600" fill="none" />}
      {variant === 2 && <path d="M2 14L14 2" stroke="#7d8081" strokeWidth="1.600" />}
    </svg>
  );
}

const dirClasses = [
  "border-[#2d5f86] bg-[#8fc3ea]",
  "border-[#6f7374] bg-[#eceeee]",
  "border-[#8f9293] bg-[#f1f2f2]",
];

const footerButton = "h-[18px] w-[57px] rounded-[2px] border text-[8px]";

function ThickenDialog() {
  const [mode, setMode] = useState("face");
  const [distance, setDistance] = useState("0.1 in");
  const [blend, setBlend] = useState(true);

  return (
    <div
      role="dialog"
      aria-label="Thicken/Offset"
      className="absolute top-[71px] left-[194px] w-[247px] rounded-md border border-[#4c5963] bg-[#bdd6ec] px-[5px] pb-[5px] font-['Liberation_Sans',Arial,sans-serif] text-[8px] text-[#1c1f20] shadow-[1px_2px_6px_2px_rgba(0,0,0,0.55)]"
    >
      <div className="-mx-[5px] flex h-[22px] items-start justify-between rounded-t-md bg-linear-to-r from-[#c4d3e0] via-[#b9d5ee] to-[#d4e5f3] pr-[5px] pl-[5px]">
        <h1 className="pt-[3px] font-['Open_Sans','Noto_Sans',sans-serif] text-[9px] leading-[13px]">Thicken/Offset</h1>
        <button
          type="button"
          aria-label="Close"
          className="flex h-[14px] w-[35px] items-center justify-center rounded-b-[3px] border border-t-0 border-[#7a2c22] bg-linear-to-b from-[#dfa195] via-[#c5493a] to-[#cf6a56]"
        >
          <svg viewBox="0 0 8 8" className="h-[7px] w-[7px]">
            <path d="M1 1l6 6M7 1L1 7" stroke="#fff" strokeWidth="2" />
          </svg>
        </button>
      </div>

      <div className="border border-[#8196a8] bg-[#eff1f1] px-[5px] pt-1 pb-[7px]">
        <div role="tablist" className="flex items-end">
          <button type="button" role="tab" aria-selected className="z-10 -mb-px h-[17px] w-[67px] border border-b-0 border-[#8e9293] bg-[#fcfdfc]">
            Thicken/Offset
          </button>
          <button type="button" role="tab" aria-selected={false} className="h-[13px] w-[30px] border border-b-0 border-l-0 border-[#a6aaab] bg-[#eceeee] pr-1">
            More
          </button>
        </div>

        <div role="tabpanel" className="flex h-[165px] border border-[#8e9293] bg-[#fcfdfc] pt-[13px] pr-1 pl-[11px]">
          <div className="flex flex-1 flex-col items-start">
            <button type="button" className="mt-[5px] flex items-center gap-[3px]">
              <span className="flex h-[19px] w-[19px] items-center justify-center border border-[#4c86b4] bg-[#9fcbee]">
                <ArrowIcon color="#b5525c" />
              </span>
              Select
            </button>
            <button type="button" className="mt-[5px] flex items-center gap-[3px]">
              <span className="flex h-[19px] w-[19px] items-center justify-center border border-[#c5c8c9] bg-[#f4f5f5]">
                <ArrowIcon color="#e2e4e4" />
              </span>
              Solids
            </button>
            <fieldset className="mt-[23px] h-[44px] w-[62px] border border-[#dee1e1] pl-[6px]">
              <legend className="px-0 leading-[10px]">Output</legend>
              <div className="flex gap-[9px] pt-[6px]">
                <button type="button" aria-label="Solid output" className="flex h-[19px] w-[19px] items-center justify-center border border-[#3f81b5] bg-[#9fcbee]">
                  <svg viewBox="0 0 14 14" className="h-[13px] w-[13px]">{treeIcons.part}</svg>
                </button>
                <button type="button" aria-label="Surface output" className="flex h-[19px] w-[19px] items-center justify-center border border-[#85898a] bg-[#dcd6cc]">
                  <svg viewBox="0 0 14 14" className="h-[13px] w-[13px]" fill="none" stroke="#4a3a2c">
                    <path d="M1 5l3-4h9v8l-3 4H1zM1 5h9v8M10 5l3-4M4 1v8h9M4 9l-3 4" />
                  </svg>
                </button>
              </div>
            </fieldset>
            <label className="mt-[12px] flex items-center gap-[3px]">
              <span className="relative flex h-[9px] w-[9px]">
                <input
                  type="checkbox"
                  checked={blend}
                  onChange={(e) => setBlend(e.target.checked)}
                  className="h-[9px] w-[9px] appearance-none border border-[#8b8f90] bg-[#f0f3f6]"
                />
                {blend && (
                  <svg viewBox="0 0 9 9" className="pointer-events-none absolute inset-0 h-[9px] w-[9px]">
                    <path d="M2 4.500l2 2.500 3-5.500" fill="none" stroke="#3c4f9a" strokeWidth="1.300" />
                  </svg>
                )}
              </span>
              Automatic Blending
            </label>
          </div>

          <div className="mr-[6px] flex h-[116px] w-7 flex-col items-center gap-[7px] border border-[#dfe2e2] pt-[9px]">
            {[0, 1, 2, 3].map((variant) => (
              <button
                key={variant}
                type="button"
                aria-label={["Join", "Cut", "Intersect", "New solid"][variant]}
                className={`flex h-[19px] w-[19px] items-center justify-center border bg-[#f4f5f5] ${
                  variant === 0 ? "border-[#6f7374]" : "border-[#c9cccd]"
                }`}
              >
                <OperationIcon variant={variant} />
              </button>
            ))}
          </div>

          <div className="flex w-[76px] flex-col">
            <div role="radiogroup" aria-label="Target" className="flex h-[45px] flex-col gap-[4px] border border-[#e1e4e4] pt-[9px] pl-1">
              {[
                ["face", "Face"],
                ["quilt", "Quilt"],
              ].map(([value, label]) => (
                <label key={value} className="flex h-3 items-center gap-[3px]">
                  <input
                    type="radio"
                    name="mode"
                    value={value}
                    checked={mode === value}
                    onChange={() => setMode(value)}
                    className="h-[9px] w-[9px] appearance-none rounded-full border border-[#9a9ea0] bg-[#eef0f1] checked:border-2 checked:border-[#9cb6c8] checked:bg-[#1f4e70]"
                  />
                  {label}
                </label>
              ))}
            </div>
            <fieldset className="mt-[5px] h-[66px] border border-[#e1e4e4] px-[3px]">
              <legend className="px-px leading-[10px]">Distance</legend>
              <div className="mt-[9px] flex h-4 border border-[#d3d6d7] bg-[#fdfefd]">
                <input
                  type="text"
                  aria-label="Distance"
                  value={distance}
                  onChange={(e) => setDistance(e.target.value)}
                  className="w-[54px] pl-1 outline-none"
                />
                <button type="button" aria-label="Distance options" className="flex flex-1 items-center justify-center bg-[#e9ebeb]">
                  <svg viewBox="0 0 4 6" className="h-[5px] w-[3px]"><path d="M0 0l4 3-4 3z" fill="#333" /></svg>
                </button>
              </div>
              <div className="mt-[7px] flex gap-[3px]">
                {dirClasses.map((cls, i) => (
                  <button key={cls} type="button" aria-label={`Direction ${i + 1}`} className={`flex h-5 w-5 items-center justify-center border ${cls}`}>
                    <DirectionIcon variant={i} />
                  </button>
                ))}
              </div>
            </fieldset>
          </div>
        </div>

        <div className="mt-[14px] flex items-center gap-[6px] pr-1">
          <button type="button" aria-label="Help" className="mr-auto flex h-[17px] w-[17px] items-center justify-center border border-[#8b8f90] bg-[#e7e9e4]">
            <svg viewBox="0 0 12 12" className="h-[11px] w-[11px]" fill="#fffef0" stroke="#26292a">
              <path d="M1 1h10v10H1z" />
              <path d="M4 4.500Q4 3 6 3t2 1.500Q8 5.500 6 6.500v.8M6 8.300v1.200" fill="none" strokeWidth="1.300" />
            </svg>
          </button>
          <button type="button" disabled className={`${footerButton} border-[#cdd0d1] bg-[#f3f4f4] text-[#9c9fa0]`}>OK</button>
          <button type="button" className={`${footerButton} border-2 border-[#4bb5dc] bg-linear-to-b from-[#eaf6fb] to-[#b9def0]`}>Cancel</button>
          <button type="button" disabled className={`${footerButton} border-[#cdd0d1] bg-[#f3f4f4] text-[#9c9fa0]`}>Apply</button>
        </div>
      </div>
    </div>
  );
}

export default function App() {
  return (
    <div className="relative min-h-screen overflow-hidden bg-black pr-[5px]">
      <div className="flex min-h-screen flex-col border-l-4 border-[#2d2d2d]">
        <Ribbon />
        <main className="flex flex-1">
          <ModelBrowser />
          <div className="relative min-w-0 flex-1 bg-[#fbfdfa]">
            <Part />
            <div className="absolute top-1 right-0.5 flex items-center gap-[5px] text-[#5b5f61]">
              <button type="button" aria-label="Minimize">
                <svg viewBox="0 0 10 10" className="h-[10px] w-[10px]"><path d="M.5 5.500h9v2h-9z" fill="#fff" stroke="currentColor" /></svg>
              </button>
              <button type="button" aria-label="Restore">
                <svg viewBox="0 0 10 10" className="h-[10px] w-[10px]" fill="#fff" stroke="currentColor"><path d="M3 1h6v6H3zM1 3h6v6H1zM3 5h2v2H3z" /></svg>
              </button>
              <button type="button" aria-label="Close">
                <svg viewBox="0 0 10 10" className="h-[10px] w-[10px]" fill="#fff" stroke="currentColor">
                  <path d="M1 1h2.500L5 3l1.500-2H9v2.500L7 5l2 1.500V9H6.500L5 7 3.500 9H1V6.500L3 5 1 3.500z" />
                </svg>
              </button>
            </div>
            <NavigationBar />
            <button type="button" aria-label="Share" className="absolute right-0 bottom-[23px] flex h-[37px] w-[37px] items-center justify-center border border-[#b0b4b5] bg-[#fbfdfa]">
              <svg viewBox="0 0 24 26" className="h-[26px] w-6">
                <path d="M12 1l11 6v12l-11 6-11-6V7z" fill="#4b9fe0" />
                <path d="M12 1l11 6-11 6L1 7z" fill="#77bbee" />
                <path d="M16 8.500L7.500 13l8.500 4.500" stroke="#fff" strokeWidth="1.600" fill="none" />
                <circle cx="16" cy="8.500" r="2.300" fill="#fff" />
                <circle cx="7.500" cy="13" r="2.600" fill="#fff" />
                <circle cx="16" cy="17.500" r="2.300" fill="#fff" />
              </svg>
            </button>
          </div>
        </main>
      </div>
      <ThickenDialog />
    </div>
  );
}
